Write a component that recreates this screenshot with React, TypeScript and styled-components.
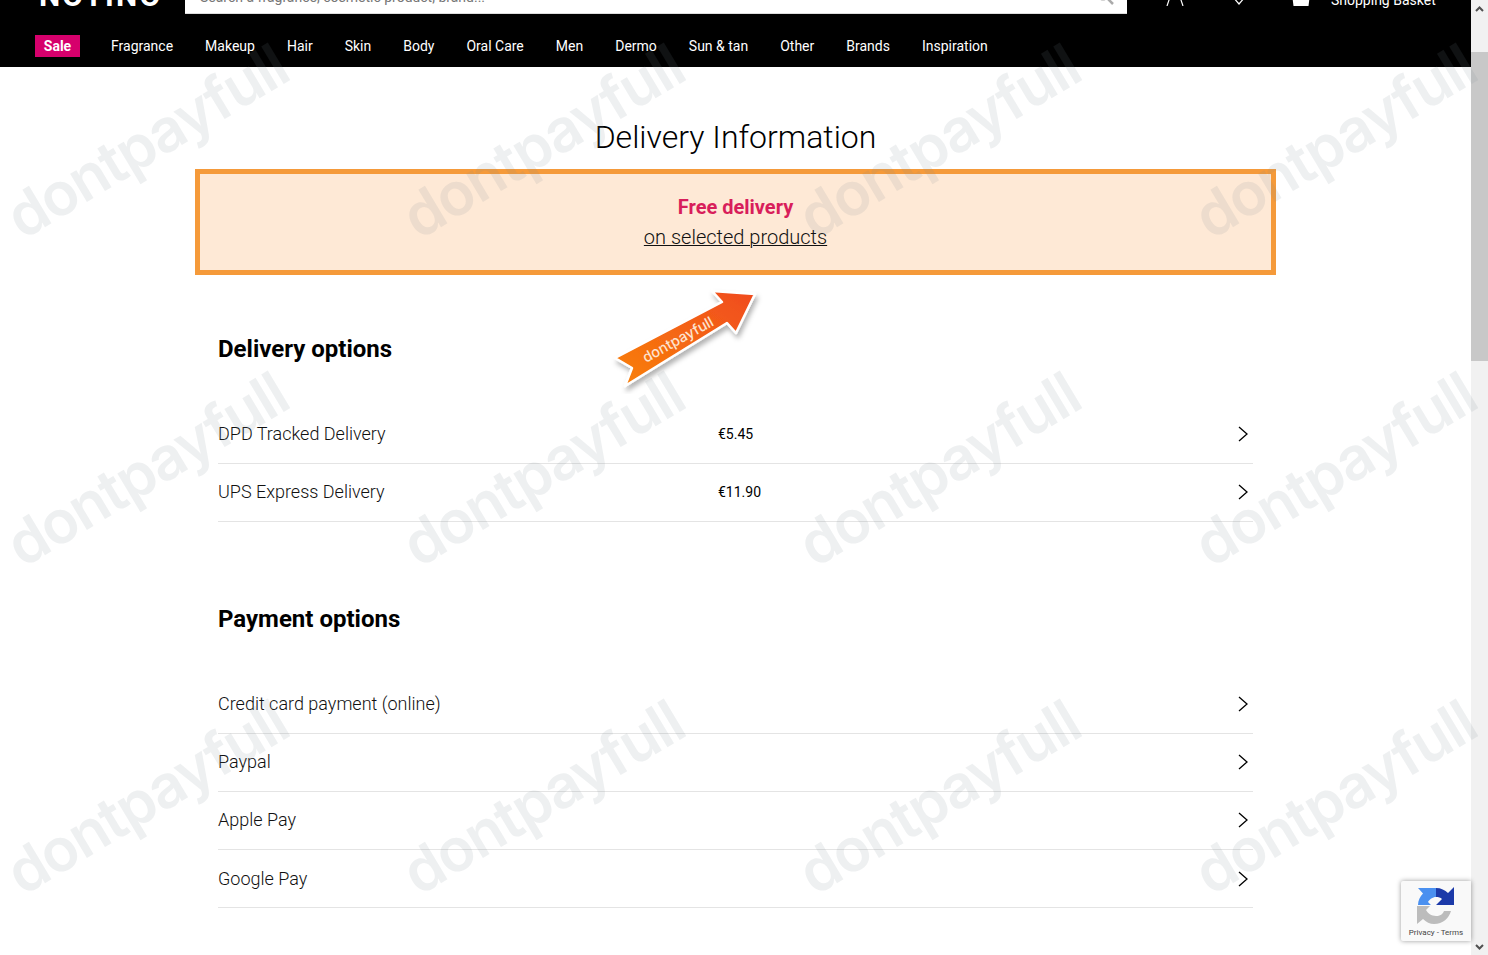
import React from "react";
import styled, { createGlobalStyle } from "styled-components";

const Global = createGlobalStyle`
  html, body { margin: 0; padding: 0; background: #fff; }
  body { font-family: Roboto, "Liberation Sans", sans-serif; color: #000; }
  * { box-sizing: border-box; }
`;

const Viewport = styled.div`
  position: relative;
  display: flex;
  width: 1488px;
  height: 955px;
  overflow: hidden;
`;

const Page = styled.div`
  width: 1471px;
  flex: none;
  display: flex;
  flex-direction: column;
`;

const Header = styled.header`
  height: 67px;
  flex: none;
  background: #000;
  overflow: hidden;
  display: flex;
  flex-direction: column;
  justify-content: flex-end;
  color: #fff;
`;

const TopRow = styled.div`
  flex: none;
  display: flex;
  align-items: flex-end;
  height: 48px;
  padding-left: 39px;
  margin-bottom: 21px;
`;

const Logo = styled.div`
  width: 146px;
  flex: none;
  font: 700 30px/30px Roboto, sans-serif;
  letter-spacing: 2.2px;
  margin-bottom: 3px;
`;

const SearchBox = styled.div`
  width: 942px;
  flex: none;
  height: 48px;
  background: #fff;
  border-bottom: 1px solid #ddd;
  display: flex;
  align-items: flex-end;
  justify-content: space-between;
  padding: 0 13px 8px 15px;
  color: #777;
  font-size: 14px;
  line-height: 16px;
`;

const IconSlot = styled.div<{ $w: number }>`
  width: ${(p) => p.$w}px;
  flex: none;
  display: flex;
  justify-content: center;
  margin-bottom: 8px;
`;

const BasketLabel = styled.div`
  font-size: 14px;
  line-height: 16px;
  margin-bottom: 6px;
  margin-left: -15px;
`;

const Nav = styled.nav`
  flex: none;
  display: flex;
  align-items: center;
  gap: 32px;
  padding: 0 0 10px 35px;
  height: 32px;
`;

const NavItem = styled.a`
  font-size: 14px;
  line-height: 22px;
  color: #fff;
  white-space: nowrap;
`;

const SaleBadge = styled.a`
  width: 45px;
  height: 22px;
  margin-right: -1px;
  background: #d6006c;
  color: #fff;
  font-size: 14px;
  font-weight: 700;
  line-height: 22px;
  text-align: center;
`;

const Main = styled.main`
  width: 1081px;
  margin: 0 auto;
  flex: none;
`;

const Title = styled.h1`
  margin: 0;
  padding-top: 51px;
  height: 102px;
  font-size: 32px;
  font-weight: 300;
  line-height: 38px;
  text-align: center;
`;

const Banner = styled.div`
  height: 106px;
  border: 5px solid #f59a3a;
  background: #fee9d6;
  display: flex;
  flex-direction: column;
  align-items: center;
  padding-top: 18px;
  font-size: 20px;
  line-height: 30px;
`;

const BannerStrong = styled.div`
  color: #d81e5b;
  font-weight: 700;
`;

const BannerLink = styled.a`
  font-weight: 300;
  color: #111;
  text-decoration: underline;
  text-decoration-thickness: 1px;
`;

const Section = styled.section<{ $top: number }>`
  padding: ${(p) => p.$top}px 23px 0;
`;

const SectionTitle = styled.h2`
  margin: 0 0 40px;
  font-size: 24px;
  font-weight: 700;
  line-height: 34px;
`;

const Row = styled.div<{ $last?: boolean }>`
  height: 58px;
  padding-bottom: ${(p) => (p.$last ? 0 : 2)}px;
  border-bottom: 1px solid #e4e4e4;
  display: flex;
  align-items: center;
`;

const RowName = styled.div`
  width: 500px;
  flex: none;
  font-size: 18px;
  font-weight: 300;
  color: #111;
`;

const RowPrice = styled.div`
  flex: 1;
  font-size: 14px;
  font-weight: 400;
`;

const Chevron = styled.svg`
  flex: none;
  margin-left: auto;
  margin-right: 5px;
`;

const ScrollBar = styled.div`
  width: 17px;
  flex: none;
  height: 955px;
  background: #f1f1f1;
  display: flex;
  flex-direction: column;
  justify-content: space-between;
  position: relative;
`;

const ScrollArrow = styled.div`
  height: 17px;
  display: flex;
  align-items: center;
  justify-content: center;
`;

const ScrollThumb = styled.div`
  position: absolute;
  top: 52px;
  left: 0;
  width: 17px;
  height: 309px;
  background: #c8c8c8;
`;

const WatermarkLayer = styled.div`
  position: absolute;
  inset: 0;
  pointer-events: none;
  z-index: 5;
  overflow: hidden;
  display: grid;
  grid-template-columns: repeat(4, 396px);
  grid-auto-rows: 328px;
`;

const WatermarkTile = styled.div`
  position: relative;
  left: -4px;
  top: 196px;
  transform-origin: 0 0;
  transform: rotate(-31deg);
  font-family: Inter, sans-serif;
  font-size: 60px;
  font-weight: 600;
  letter-spacing: -1.5px;
  line-height: 1;
  height: 60px;
  white-space: nowrap;
  color: rgba(125, 138, 150, 0.13);
`;

const ArrowBadge = styled.svg`
  position: absolute;
  left: 608px;
  top: 284px;
  z-index: 6;
`;

const Recaptcha = styled.div`
  position: absolute;
  left: 1401px;
  top: 881px;
  width: 70px;
  height: 60px;
  background: #f9f9f9;
  border-radius: 2px 0 0 2px;
  box-shadow: 0 0 5px rgba(0, 0, 0, 0.4);
  z-index: 7;
  display: flex;
  flex-direction: column;
  align-items: center;
  padding-top: 6px;
`;

const RecaptchaText = styled.div`
  font: 400 8px/10px Roboto, sans-serif;
  color: #444;
  margin-top: 3px;
  white-space: nowrap;
`;

const ChevronIcon = () => (
  <Chevron width="10" height="16" viewBox="0 0 10 16" fill="none">
    <path d="M1 1l8 7-8 7" stroke="#000" strokeWidth="1.3" />
  </Chevron>
);

const navItems = ["Fragrance", "Makeup", "Hair", "Skin", "Body", "Oral Care", "Men", "Dermo", "Sun & tan", "Other", "Brands", "Inspiration"];
const delivery = [
  ["DPD Tracked Delivery", "€5.45"],
  ["UPS Express Delivery", "€11.90"],
];
const payment = ["Credit card payment (online)", "Paypal", "Apple Pay", "Google Pay"];

export default function App() {
  return (
    <Viewport>
      <Global />
      <Page>
        <Header>
          <TopRow>
            <Logo>NOTINO</Logo>
            <SearchBox>
              <span>Search a fragrance, cosmetic product, brand...</span>
              <svg width="18" height="18" viewBox="0 0 18 18" fill="none">
                <circle cx="7" cy="7" r="5.5" stroke="#aaa" strokeWidth="2" />
                <path d="M11 11l6 6" stroke="#aaa" strokeWidth="2.5" />
              </svg>
            </SearchBox>
            <IconSlot $w={95}>
              <svg width="20" height="20" viewBox="0 0 20 20" fill="none">
                <circle cx="10" cy="5" r="5" stroke="#fff" strokeWidth="1.2" />
                <path d="M2 20l3-9h10l3 9" stroke="#fff" strokeWidth="1.2" />
              </svg>
            </IconSlot>
            <IconSlot $w={33}>
              <svg width="14" height="14" viewBox="0 0 14 14" fill="none">
                <path d="M1 5l6 7 6-7V1H1z" stroke="#fff" strokeWidth="1.2" />
              </svg>
            </IconSlot>
            <IconSlot $w={91}>
              <svg width="18" height="12" viewBox="0 0 18 12">
                <path d="M0 0h18l-1.5 12h-15z" fill="#fff" />
              </svg>
            </IconSlot>
            <BasketLabel>Shopping Basket</BasketLabel>
          </TopRow>
          <Nav>
            <SaleBadge>Sale</SaleBadge>
            {navItems.map((n) => (
              <NavItem key={n}>{n}</NavItem>
            ))}
          </Nav>
        </Header>
        <Main>
          <Title>Delivery Information</Title>
          <Banner>
            <BannerStrong>Free delivery</BannerStrong>
            <BannerLink>on selected products</BannerLink>
          </Banner>
          <Section $top={57}>
            <SectionTitle>Delivery options</SectionTitle>
            {delivery.map(([n, p]) => (
              <Row key={n}>
                <RowName>{n}</RowName>
                <RowPrice>{p}</RowPrice>
                <ChevronIcon />
              </Row>
            ))}
          </Section>
          <Section $top={80}>
            <SectionTitle>Payment options</SectionTitle>
            {payment.map((n, i) => (
              <Row key={n} $last={i === 3}>
                <RowName>{n}</RowName>
                <ChevronIcon />
              </Row>
            ))}
          </Section>
        </Main>
      </Page>
      <ScrollBar>
        <ScrollArrow>
          <svg width="9" height="6" viewBox="0 0 9 6" fill="none">
            <path d="M1 5l3.5-3.5L8 5" stroke="#505050" strokeWidth="2" />
          </svg>
        </ScrollArrow>
        <ScrollThumb />
        <ScrollArrow>
          <svg width="9" height="6" viewBox="0 0 9 6" fill="none">
            <path d="M1 1l3.5 3.5L8 1" stroke="#505050" strokeWidth="2" />
          </svg>
        </ScrollArrow>
      </ScrollBar>
      <WatermarkLayer>
        {Array.from({ length: 12 }).map((_, i) => (
          <WatermarkTile key={i}>dontpayfull</WatermarkTile>
        ))}
      </WatermarkLayer>
      <ArrowBadge width="156" height="110" viewBox="0 0 156 110">
        <defs>
          <linearGradient id="arrowFill" x1="0" y1="1" x2="1" y2="0">
            <stop offset="0" stopColor="#f98208" />
            <stop offset="1" stopColor="#f04a20" />
          </linearGradient>
          <filter id="arrowShadow" x="-20%" y="-20%" width="140%" height="140%">
            <feDropShadow dx="2" dy="4" stdDeviation="2.5" floodColor="#000" floodOpacity="0.3" />
          </filter>
        </defs>
        <path
          d="M7 74 L114 18 L104 7 L147 10 L128 49 L119 39 L17 102 L24 84 Z"
          fill="url(#arrowFill)"
          stroke="#fff"
          strokeWidth="2.5"
          strokeLinejoin="round"
          filter="url(#arrowShadow)"
        />
        <text
          x="38"
          y="79"
          transform="rotate(-29 38 79)"
          fontFamily="Inter, sans-serif"
          fontWeight="500"
          fontSize="14.5"
          fill="#fde3cf"
        >
          dontpayfull
        </text>
      </ArrowBadge>
      <Recaptcha>
        <svg width="38" height="38" viewBox="0 0 38 38">
          <path d="M19 1C24 1 28 3 31 6L37 0V18H19L25 12C23.5 10.5 21.5 10 19 10Z" fill="#1c3aa9" />
          <path d="M1 18C1 13.5 3 9.5 6 6.5L1 1H19V10C15.5 10 12.5 12.5 11 15L14 18Z" fill="#4a90f0" />
          <path d="M0 37V19H13L9 23C10.5 26 14.5 29 19 29C23 29 26 27 27 24H34C32 31 26 37 17 37C13 37 9 35 6 32Z" fill="#bcbcbc" />
        </svg>
        <RecaptchaText>Privacy - Terms</RecaptchaText>
      </Recaptcha>
    </Viewport>
  );
}
